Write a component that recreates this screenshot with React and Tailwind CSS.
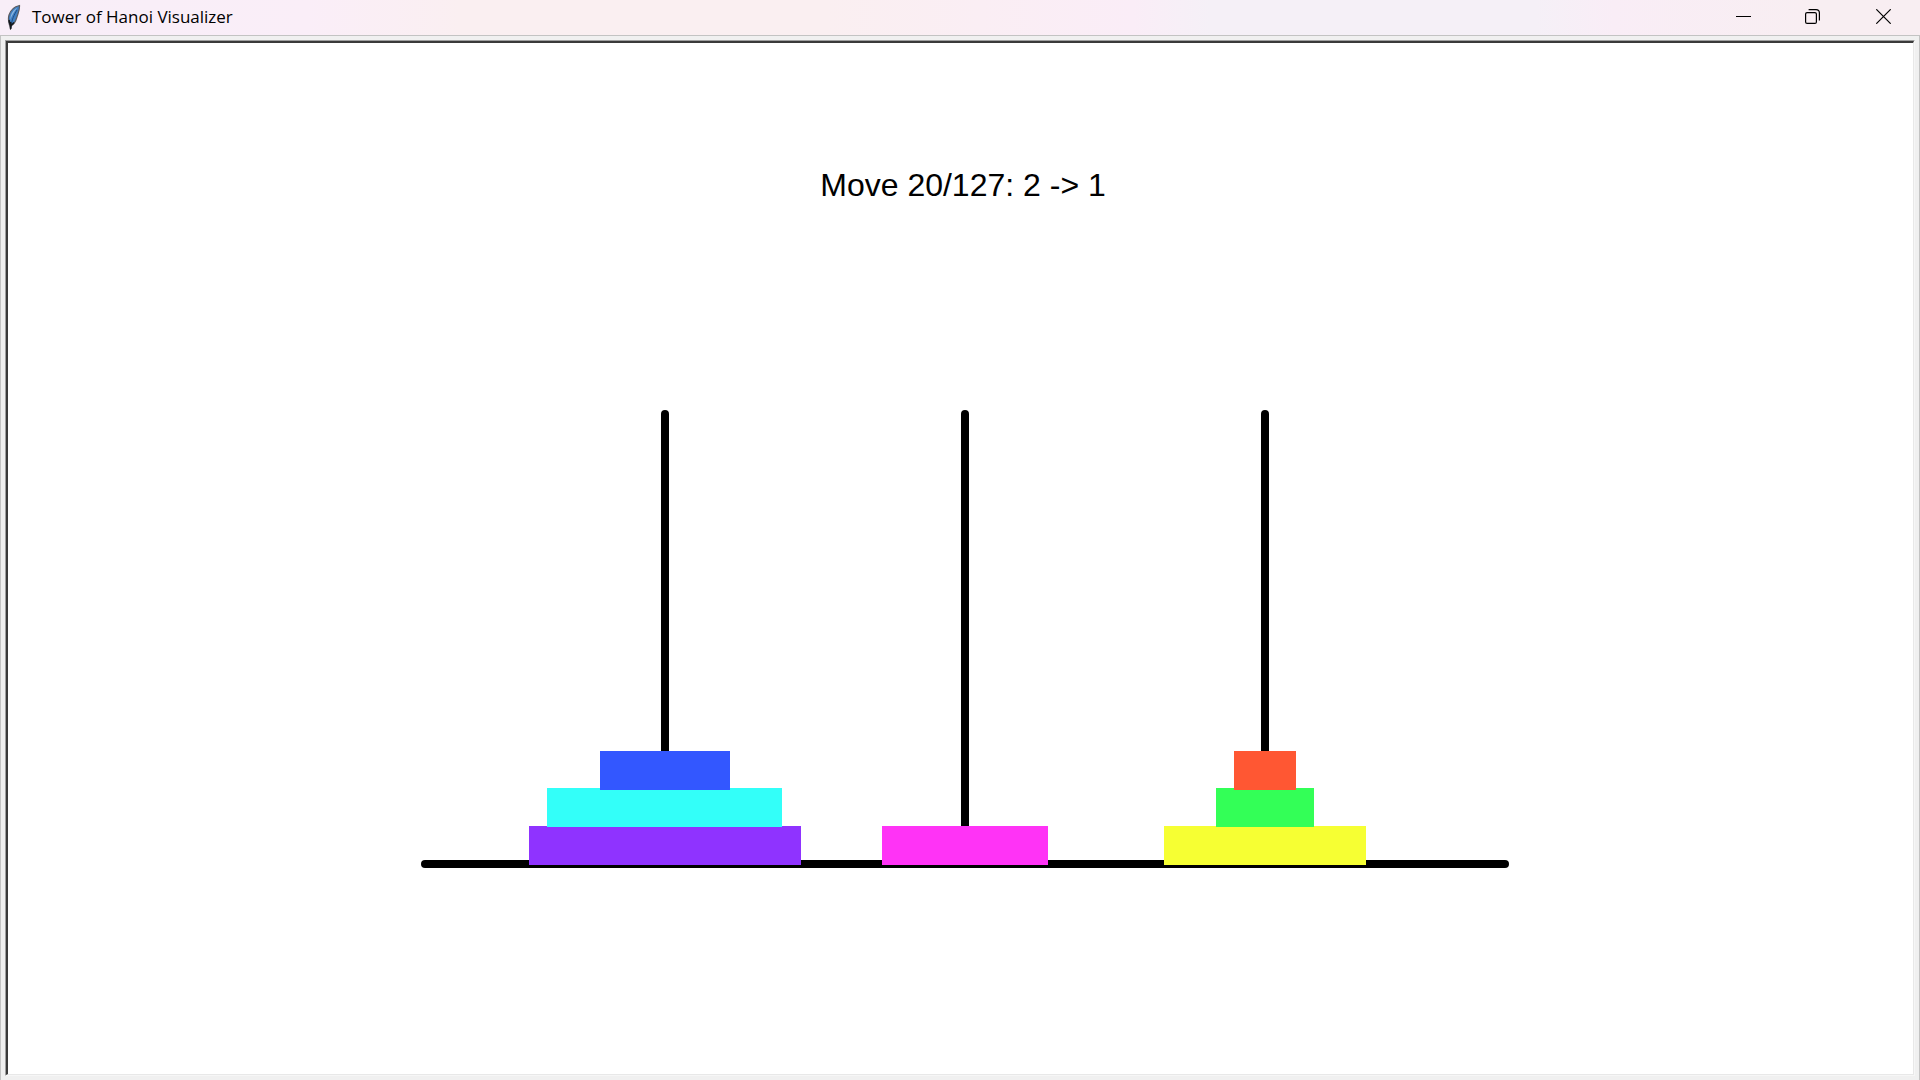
const discs = [
  { x: 108, y: 416, w: 272, h: 39, fill: "#8f33ff" },
  { x: 126, y: 378, w: 235, h: 39, fill: "#33fff9" },
  { x: 179, y: 341, w: 130, h: 39, fill: "#3357ff" },
  { x: 461, y: 416, w: 166, h: 39, fill: "#ff33f6" },
  { x: 743, y: 416, w: 202, h: 39, fill: "#f6ff33" },
  { x: 795, y: 378, w: 98, h: 39, fill: "#33ff57" },
  { x: 813, y: 341, w: 62, h: 39, fill: "#ff5733" },
];

function Feather() {
  return (
    <svg width="16" height="26" viewBox="0 0 16 26" aria-hidden="true">
      <path d="M13.500 1.500C9 2.500 4.500 6 3 11C2 14.500 2.300 17.500 3.500 21L4.500 25L5.500 21.500C8 20 9.800 17 10.800 13.500C12 9.500 13.800 6 13.500 1.500Z" fill="#3f7fc4" stroke="#5b5b60" strokeWidth="1.200" />
      <path d="M11.500 3.500C8.500 5 5.800 8 4.700 12L4.200 16C6 11 8.500 7 11.500 3.500Z" fill="#8ab6e0" />
      <path d="M11 6C8 11 5.800 15.500 4.700 24" fill="none" stroke="#1f4f86" strokeWidth="1" />
      <path d="M3 16L4.200 21M8 18.500L5 21.500M4.700 18V25" fill="none" stroke="#15171c" strokeWidth="1.500" />
    </svg>
  );
}

export default function App() {
  return (
    <div className="flex min-h-screen flex-col bg-[#f0f0f0] font-['Open_Sans',sans-serif] text-black">
      <header className="flex h-[35px] items-center justify-between bg-[linear-gradient(to_right,#f8eef8_0%,#faeef8_16%,#faeff1_24%,#faeff1_43%,#faedf7_59%,#f5f0f7_63%,#f5f0f7_80%,#f9edf6_84%,#f8eef2_94%)] pb-[2px]">
        <div className="flex items-center gap-2 pl-[6px]">
          <Feather />
          <h1 className="pl-[2px] text-[17px] leading-6">Tower of Hanoi Visualizer</h1>
        </div>
        <div className="flex h-full">
          <button aria-label="Minimize" className="flex w-[70px] items-center justify-center">
            <svg width="15" height="15" viewBox="0 0 15 15"><path d="M0 7.500H15" stroke="#000" /></svg>
          </button>
          <button aria-label="Restore" className="flex w-[68px] items-center justify-center">
            <svg width="15" height="15" viewBox="0 0 15 15" fill="none" stroke="#000" strokeWidth="1.200">
              <rect x="0.600" y="3.600" width="10.800" height="10.800" rx="1.500" />
              <path d="M3.600 0.600H11C13 0.600 14.400 2 14.400 4V11.400" />
            </svg>
          </button>
          <button aria-label="Close" className="flex w-[74px] items-center justify-center">
            <svg width="15" height="15" viewBox="0 0 15 15"><path d="M0.300 0.300L14.700 14.700M14.700 0.300L0.300 14.700" stroke="#000" strokeWidth="1.200" /></svg>
          </button>
        </div>
      </header>
      <div className="flex grow flex-col border-x border-t border-[#c3c3c3] pt-1 pr-1 pb-1 pl-1">
        <div className="flex grow border border-t-[#a0a0a0] border-r-[#f6f6f6] border-b-[#f6f6f6] border-l-[#a0a0a0]">
          <main className="flex grow flex-col items-center border-t-2 border-l-2 border-r border-b border-t-[#3a3a3a] border-l-[#3a3a3a] border-r-[#e8e8e8] border-b-[#e8e8e8] bg-white pt-[122px] pl-[9px]">
            <p className="pr-1 font-['Liberation_Sans',sans-serif] text-[32px] leading-10">Move 20/127: 2 -&gt; 1</p>
            <svg className="mt-[205px]" width="1088" height="458" viewBox="0 0 1088 458" role="img" aria-label="Three pegs holding seven discs">
              <g stroke="#000" strokeWidth="8" strokeLinecap="round">
                <path d="M4 454H1084" />
                <path d="M244 4V454M544 4V454M844 4V454" />
              </g>
              {discs.map((d) => (
                <rect key={d.fill} x={d.x} y={d.y} width={d.w} height={d.h} fill={d.fill} />
              ))}
            </svg>
          </main>
        </div>
      </div>
    </div>
  );
}
